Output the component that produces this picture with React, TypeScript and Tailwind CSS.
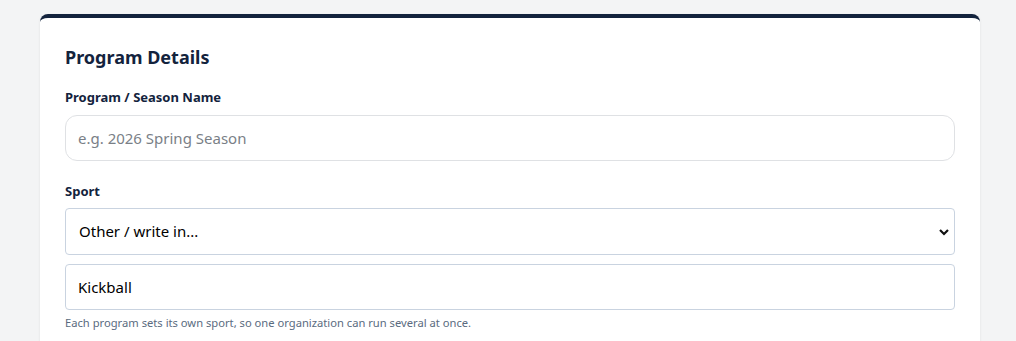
import { useState } from "react";

const SPORTS = ["Soccer", "Basketball", "Baseball", "Volleyball", "Other / write in..."];

export default function App() {
  const [name, setName] = useState("");
  const [sport, setSport] = useState("Other / write in...");
  const [custom, setCustom] = useState("Kickball");

  return (
    <div className="min-h-screen bg-[#f3f4f5] pt-[14px] font-['Noto_Sans',sans-serif]">
      <div className="ml-10 w-[940px] rounded-lg border-t-4 border-[#13233d] bg-white px-[25px] pt-[27px] pb-6 shadow-[0_1px_3px_rgba(0,0,0,0.08)]">
        <h2 className="text-[18px] font-bold leading-6 text-[#13233d]">Program Details</h2>

        <label className="mt-[18px] block">
          <span className="block text-[13px] font-bold leading-5 text-[#13233d]">Program / Season Name</span>
          <input
            type="text"
            value={name}
            onChange={(e) => setName(e.target.value)}
            placeholder="e.g. 2026 Spring Season"
            className="mt-2 h-[46px] w-full rounded-xl border border-[#dfe1e4] px-3 text-[15px] text-black placeholder:text-[#7a7f87] outline-none"
          />
        </label>

        <label className="mt-5 block">
          <span className="block text-[13px] font-bold leading-5 text-[#13233d]">Sport</span>
          <div className="relative mt-[7px]">
            <select
              value={sport}
              onChange={(e) => setSport(e.target.value)}
              className="h-[47px] w-full appearance-none rounded border border-[#c9d3e0] bg-white px-[13px] text-[15px] text-black outline-none"
            >
              {SPORTS.map((s) => (
                <option key={s}>{s}</option>
              ))}
            </select>
            <svg
              className="pointer-events-none absolute right-[5px] top-1/2 -translate-y-1/2"
              width="12"
              height="12"
              viewBox="0 0 12 12"
            >
              <path d="M2 4l4 4 4-4" fill="none" stroke="#111" strokeWidth="2.2" />
            </svg>
          </div>
        </label>

        <input
          type="text"
          value={custom}
          onChange={(e) => setCustom(e.target.value)}
          className="mt-[9px] h-[46px] w-full rounded border border-[#c9d3e0] px-3 text-[15px] text-black outline-none"
        />
        <p className="mt-[5px] text-[11.2px] leading-4 text-[#5a6b80]">
          Each program sets its own sport, so one organization can run several at once.
        </p>
      </div>
    </div>
  );
}
